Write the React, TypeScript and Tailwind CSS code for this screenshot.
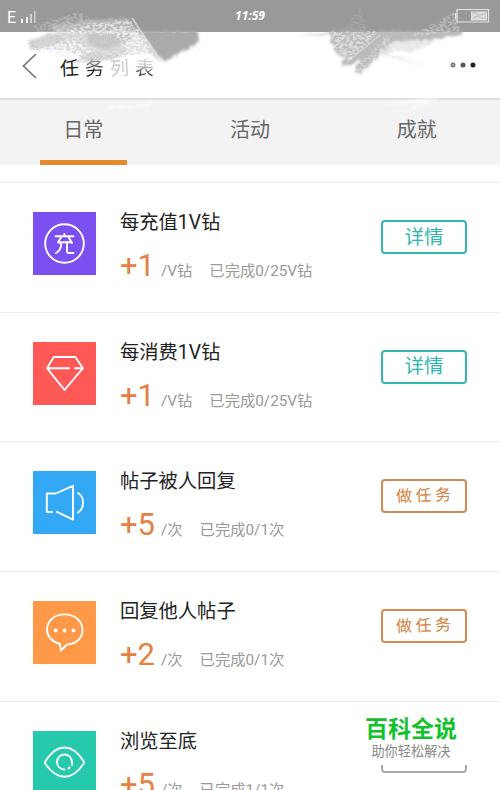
import type { ReactNode } from 'react';

interface Task {
  title: string;
  reward: string;
  unit: string;
  progress: string;
  color: string;
  icon: ReactNode;
  action: 'detail' | 'todo' | 'done';
}

const RechargeIcon = () => (
  <>
    <circle cx="31.5" cy="31.5" r="19.3" />
    <path d="M31.3 22v2M22.5 24.2h18M28.500 24.500l-3.500 6 13.300-.5M35.500 25l3.500 6M28.200 31c0 5-1.400 8-5.200 10M34 31v8.200c0 1.300.5 1.800 1.700 1.800h4.800" />
  </>
);

const DiamondIcon = () => (
  <path d="M36 26.2H14L20.8 15h21.5l7.7 11.200L31.500 48 14 26.200M42 26.200h8" />
);

const SpeakerIcon = () => (
  <path d="M19 41h-5.2V22.5h9L40 14.8v33.8l-16-7.8M45 22c6.7 4 6.7 15.2 0 19.5" />
);

const CommentIcon = () => (
  <>
    <path d="M27 43C19 41 14 35 14 29c0-9 7.500-15.600 17.500-15.600S49.500 20 49.500 29 42 43 34 43.500L27.800 49.500z" />
    <g fill="#fff" stroke="none">
      <circle cx="22.7" cy="29.5" r="1.9" />
      <circle cx="31.6" cy="29.5" r="1.9" />
      <circle cx="40.5" cy="29.5" r="1.9" />
    </g>
  </>
);

const EyeIcon = () => (
  <>
    <path d="M12.5 30C18 21.5 24.5 16.5 31.5 16.5S45 21.5 50.5 30Q51.3 31.5 50.5 33C45 41 38.5 45.8 31.5 45.8S18 41 12.5 33Q11.7 31.5 12.5 30z" />
    <path d="M31.500 38.500A7.500 7.500 0 1 1 39 31V34M36.500 36.500L35.500 37.500" />
  </>
);

const tasks: Task[] = [
  { title: '每充值1V钻', reward: '+1', unit: '/V钻', progress: '已完成0/25V钻', color: 'bg-[#7c4ff0]', icon: <RechargeIcon />, action: 'detail' },
  { title: '每消费1V钻', reward: '+1', unit: '/V钻', progress: '已完成0/25V钻', color: 'bg-[#ff5957]', icon: <DiamondIcon />, action: 'detail' },
  { title: '帖子被人回复', reward: '+5', unit: '/次', progress: '已完成0/1次', color: 'bg-[#33a9f6]', icon: <SpeakerIcon />, action: 'todo' },
  { title: '回复他人帖子', reward: '+2', unit: '/次', progress: '已完成0/1次', color: 'bg-[#ff9947]', icon: <CommentIcon />, action: 'todo' },
  { title: '浏览至底', reward: '+5', unit: '/次', progress: '已完成1/1次', color: 'bg-[#26c9ab]', icon: <EyeIcon />, action: 'done' },
];

// Chalky brush strokes that run from the status bar into the header
function BrushStrokes() {
  return (
    <svg className="pointer-events-none absolute left-0 top-0" width="500" height="110" fill="none">
      <defs>
        <filter id="chalk" filterUnits="userSpaceOnUse" x="0" y="0" width="500" height="110" colorInterpolationFilters="sRGB">
          <feTurbulence type="fractalNoise" baseFrequency="0.3 0.45" numOctaves="3" seed="8" result="noise" />
          <feColorMatrix in="noise" type="matrix" values="0 0 0 0 0  0 0 0 0 0  0 0 0 0 0  0 0 0 4 -1.5" result="grain" />
          <feDisplacementMap in="SourceGraphic" in2="noise" scale="6" xChannelSelector="R" yChannelSelector="G" result="rough" />
          <feComposite in="rough" in2="grain" operator="in" />
          <feGaussianBlur stdDeviation="0.5" />
        </filter>
        <filter id="soft" filterUnits="userSpaceOnUse" x="0" y="0" width="500" height="110" colorInterpolationFilters="sRGB">
          <feTurbulence type="fractalNoise" baseFrequency="0.25" numOctaves="3" seed="3" result="noise" />
          <feDisplacementMap in="SourceGraphic" in2="noise" scale="6" xChannelSelector="R" yChannelSelector="G" />
          <feGaussianBlur stdDeviation="1" />
        </filter>
      </defs>
      {/* left patch */}
      <g filter="url(#soft)">
        <path d="M28 40L60 31H198L199 43L164 63L150 54L134 54L112 59L96 64L66 62L48 52L28 48z" fill="#ccc" opacity=".8" />
        <path d="M48 26L90 20L128 18L140 32L150 58L132 54L112 56L84 52z" fill="#fff" opacity=".28" />
        <path d="M40 47L74 40L94 50L72 62L48 60z" fill="#fff" opacity=".8" />
        <path d="M138 31H198L197 43L164 61z" fill="#a3a3a3" opacity=".85" />
        <path d="M86 33H134L128 42L104 50L88 44z" fill="#a8a8a8" opacity=".5" />
      </g>
      <g filter="url(#chalk)">
        <path d="M30 43L90 24L128 20L144 36L158 62L92 64L46 54z" fill="#fff" opacity=".6" />
        <path d="M28 43L64 33H112L128 50L110 61L86 60L66 50L30 48z" fill="#a0a0a0" opacity=".4" />
        <path d="M32 26L78 12L100 24L84 32L40 33z" fill="#fff" opacity=".25" />
      </g>
      <path d="M132 18L162 63" stroke="#eee" strokeWidth="2" opacity=".6" />
      {/* right patch */}
      <g filter="url(#soft)">
        <path d="M330 30H464L462 35L430 40L396 41L380 54L361 74L353 72L361 60L347 66L341 65L345 58L335 53L331 42z" fill="#aaa" opacity=".8" />
        <path d="M390 42L437 40L412 53L396 50L385 57L378 54z" fill="#ddd" opacity=".65" />
        <path d="M376 54L424 67L400 56z" fill="#e8e8e8" opacity=".6" />
        <path d="M298 36L332 32V35z" fill="#bbb" opacity=".65" />
      </g>
      <g filter="url(#chalk)">
        <path d="M331 32H378L350 60L336 54z" fill="#fff" opacity=".5" />
        <path d="M386 36L396 42L360 74L354 72z" fill="#fff" opacity=".35" />
        <path d="M346 26L360 8L368 31H344z" fill="#fff" opacity=".12" />
        <path d="M434 24L457 10L460 32L410 36z" fill="#fff" opacity=".3" />
      </g>
      <path d="M347 62L380 35" stroke="#fff" strokeWidth="1.5" opacity=".35" />
      <g filter="url(#soft)" opacity=".6">
        <path d="M108 108L153 104M386 105L438 98M412 108L430 101" stroke="#fff" strokeWidth="3" />
      </g>
    </svg>
  );
}

function StatusBar() {
  return (
    <div className="flex h-8 shrink-0 items-center bg-[#999] text-white">
      <div className="flex w-[225px] items-end gap-[5px] pl-[7px] pt-[3px]">
        <span className="text-[16px] leading-[14px]">E</span>
        <svg width="32" height="14" fill="#fff" className="mb-px">
          <path d="M0 9h2v4H0z" />
          <path d="M5 7h2v6H5z" opacity=".85" />
          <path d="M9 4h2v9H9z" opacity=".55" />
          <path d="M13 1h1.5v12H13z" opacity=".5" />
        </svg>
      </div>
      <span className="w-[50px] text-center font-['Open_Sans'] text-[12px] font-bold italic leading-none">11:59</span>
      <svg className="ml-auto mr-[10px]" width="35" height="16" fill="none">
        <path d="M2 1.5h31.5v12.5H2zM.5 5v6" stroke="#e3e3e3" strokeWidth="1.2" />
        <path d="M16 3.5h16v9H16z" fill="#ddd" />
        <path d="M17 5h4l2 2h4l4-2M18 10l4-2 4 2h5" stroke="#bbb" />
      </svg>
    </div>
  );
}

function Header() {
  return (
    <div className="flex h-[66px] shrink-0 items-center bg-white pl-[22px] pr-[24px]">
      <svg width="16" height="28" fill="none" stroke="#777" strokeWidth="1.7" className="mt-[2px]">
        <path d="M14 2L1.5 14L14 26" />
      </svg>
      <h1 className="relative z-10 ml-[22px] mt-[6px] flex gap-[6px] text-[19px] leading-none">
        <span className="-rotate-3 text-[#222]">任</span>
        <span className="-rotate-3 bg-gradient-to-b from-[#bbb] to-[#222] to-60% bg-clip-text text-transparent">务</span>
        <span className="-rotate-3 text-[#ccc]">列</span>
        <span className="rotate-3 bg-gradient-to-b from-[#ccc] from-30% to-[#333] to-90% bg-clip-text text-transparent">表</span>
      </h1>
      <svg width="28" height="8" className="ml-auto">
        <circle cx="5" cy="4" r="2" fill="#aaa" stroke="#555" />
        <circle cx="15" cy="4" r="2.5" fill="#555" />
        <circle cx="25" cy="4" r="2.5" fill="#222" />
      </svg>
    </div>
  );
}

function Tabs() {
  return (
    <div className="grid h-[67px] shrink-0 grid-cols-3 border-t-2 border-[#dedede] bg-[#f3f3f3] text-center text-[20px] leading-[61px] text-[#666]">
      <div className="flex flex-col items-center">
        <span className="h-[60px]">日常</span>
        <span className="h-[5px] w-[87px] bg-[#e58a2c]" />
      </div>
      <div>活动</div>
      <div>成就</div>
    </div>
  );
}

function ActionButton({ action }: { action: Task['action'] }) {
  if (action === 'detail') {
    return (
      <button className="block h-[34px] w-[86px] rounded-[4px] border-2 border-[#33b7b2] text-[19.5px] leading-[29px] text-[#2eb5b0]">详情</button>
    );
  }
  if (action === 'todo') {
    return (
      <button className="block h-[34px] w-[86px] rounded-[4px] border-2 border-[#d58a50] text-[16px] leading-[30px] tracking-[3.5px] text-[#d5803c]">
        <span className="ml-[3px] inline-block -rotate-2">做任务</span>
      </button>
    );
  }
  return <div className="h-[34px] w-[86px] rounded-[4px] border-2 border-[#aaa]" />;
}

function TaskRow({ task }: { task: Task }) {
  return (
    <div className="flex h-[129.67px] shrink-0 items-start border-t border-[#ededed] px-[33px]">
      <div className={`mt-[29px] size-[63px] ${task.color}`}>
        <svg width="63" height="63" fill="none" stroke="#fff" strokeWidth="1.9" strokeLinejoin="round" strokeLinecap="round">
          {task.icon}
        </svg>
      </div>
      <div className="ml-6 pt-[26px]">
        <h2 className="h-[32px] text-[19.3px] leading-[28px] text-[#222]">{task.title}</h2>
        <div className="flex h-[50px] items-baseline whitespace-nowrap text-[15.3px] leading-[50px] text-[#999]">
          <span className="w-[41px] text-[31px] text-[#e38242]">{task.reward}</span>
          <span className="mr-[17px]">{task.unit}</span>
          <span>{task.progress}</span>
        </div>
      </div>
      <div className="ml-auto mt-[37px]">
        <ActionButton action={task.action} />
      </div>
    </div>
  );
}

export default function App() {
  return (
    <div className="relative flex h-[790px] w-[500px] flex-col overflow-hidden bg-white font-[Roboto,'Noto_Sans_CJK_SC',sans-serif]">
      <StatusBar />
      <Header />
      <Tabs />
      <div className="mt-[17px] flex flex-col">
        {tasks.map((task) => (
          <TaskRow key={task.title} task={task} />
        ))}
      </div>
      <BrushStrokes />
      {/* watermark sits over the last row's button */}
      <div className="absolute left-[351px] top-[715px] h-[50px] w-[120px] bg-white text-center">
        <div className="text-[23px] font-bold leading-[30px] text-[#12c22d]">百科全说</div>
        <div className="text-[13.2px] leading-[14px] text-[#888]">助你轻松解决</div>
      </div>
    </div>
  );
}
